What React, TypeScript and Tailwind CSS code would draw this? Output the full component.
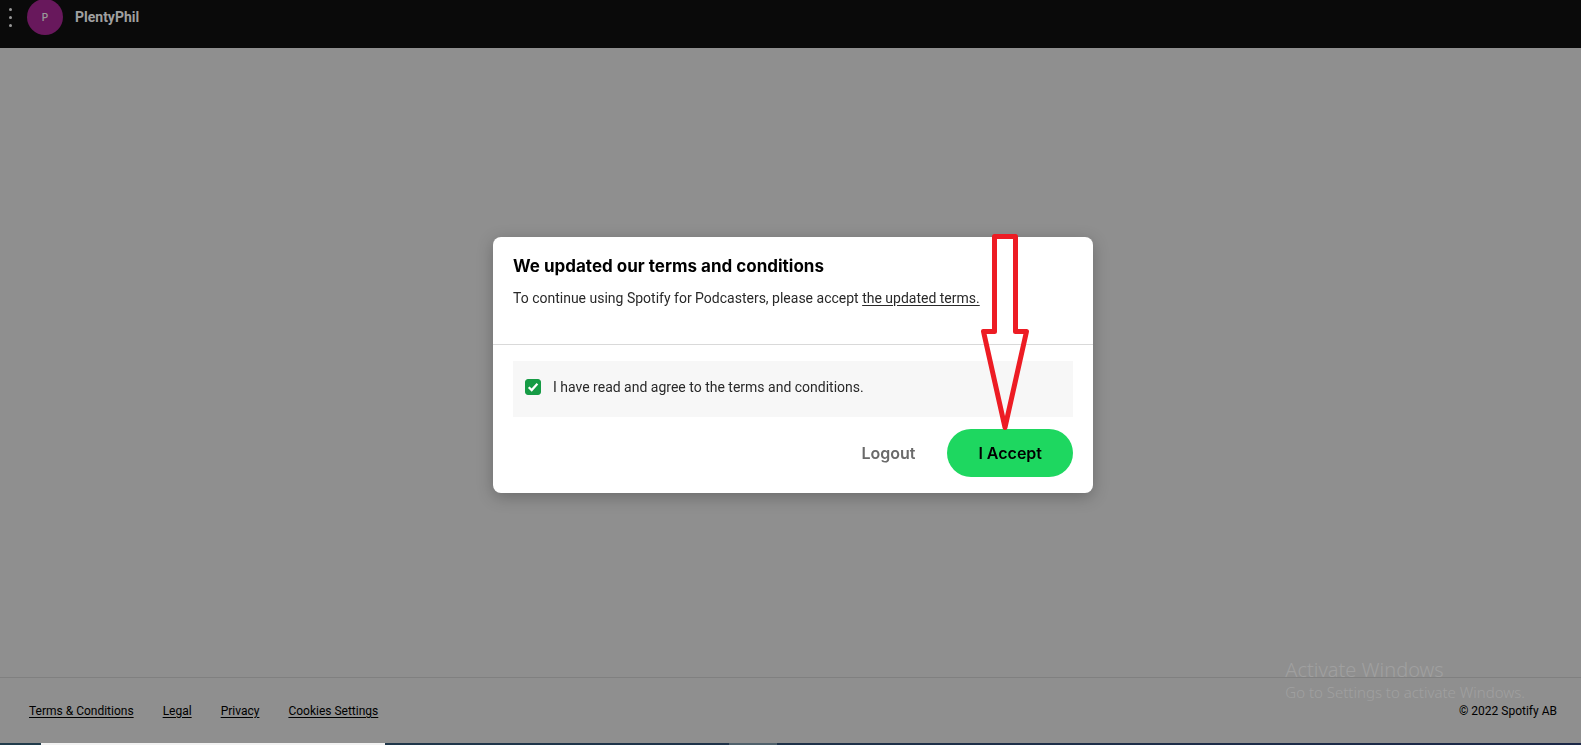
import { useState } from "react";

const FOOTER_LINKS = ["Terms & Conditions", "Legal", "Privacy", "Cookies Settings"];

function Header() {
  return (
    <header className="flex h-12 shrink-0 items-center bg-[#0a0a0a] pb-3.5 pl-[9px]">
      <button type="button" aria-label="Menu" className="mr-[15px] flex w-[3px] flex-col gap-[5px] text-[#999]">
        <span className="size-[3px] rounded-full bg-current" />
        <span className="size-[3px] rounded-full bg-current" />
        <span className="size-[3px] rounded-full bg-current" />
      </button>
      <span className="flex size-9 shrink-0 items-center justify-center rounded-full bg-[#68185c] text-[10px] font-medium text-[#999]">
        P
      </span>
      <span className="ml-3 text-sm font-bold text-[#a0a0a0]">PlentyPhil</span>
    </header>
  );
}

function Footer() {
  return (
    <footer className="relative flex h-[66px] shrink-0 items-center justify-between border-t border-[#808080] pl-[29px] pr-6 text-xs text-black">
      <nav className="flex gap-[29px]">
        {FOOTER_LINKS.map((label) => (
          <a key={label} href="#" className="underline underline-offset-2">
            {label}
          </a>
        ))}
      </nav>
      <span>© 2022 Spotify AB</span>

      {/* system watermark */}
      <div className="pointer-events-none absolute -top-5 right-14 font-['Noto_Sans',sans-serif] text-[#a0a0a0]">
        <p className="text-xl leading-6 font-light">Activate Windows</p>
        <p className="text-[15px] leading-5 font-light">Go to Settings to activate Windows.</p>
      </div>
    </footer>
  );
}

function Taskbar() {
  return (
    <div className="flex h-0.5 shrink-0 bg-linear-to-r from-[#213c4b] to-[#1b2747]">
      <div className="ml-[41px] w-[344px] bg-[#f2f2f2]" />
      <div className="ml-[344px] w-12 bg-[#50616c]" />
    </div>
  );
}

function Arrow() {
  return (
    <svg
      className="pointer-events-none absolute -top-1 right-16 h-[200px] w-12"
      viewBox="0 0 48 200"
      fill="none"
      stroke="#ed1c24"
      strokeWidth="5"
      strokeLinejoin="round"
      aria-hidden="true"
    >
      <path d="M13.500 3.500H34.500V98.500H45.500L24 194.500L2.500 98.500H13.500Z" />
    </svg>
  );
}

function TermsDialog() {
  const [agreed, setAgreed] = useState(true);

  return (
    <div className="fixed inset-0 flex items-center justify-center pb-[15px] pl-[5px]">
      <section
        role="dialog"
        aria-labelledby="terms-title"
        className="relative w-full max-w-[600px] rounded-lg bg-white shadow-[0_4px_16px_rgba(0,0,0,0.25)]"
      >
        <div className="h-[108px] border-b border-[#d9d9d9] px-5 pt-[17px]">
          <h1 id="terms-title" className="font-['Inter',sans-serif] text-[17px] leading-6 font-bold text-black">
            We updated our terms and conditions
          </h1>
          <p className="mt-2 text-sm leading-6 text-[#292929]">
            To continue using Spotify for Podcasters, please accept{" "}
            <a href="#" className="underline underline-offset-2">
              the updated terms.
            </a>
          </p>
        </div>

        <div className="px-5 py-4">
          <label className="flex h-14 items-start gap-3 bg-[#f7f7f7] px-3 pt-4 text-sm leading-5 text-[#292929]">
            <span className="relative mt-0.5 size-4 shrink-0">
              <input
                type="checkbox"
                checked={agreed}
                onChange={(e) => setAgreed(e.target.checked)}
                className="block size-4 appearance-none rounded-[3px] border border-[#169b45] checked:bg-[#169b45]"
              />
              {agreed && (
                <svg
                  viewBox="0 0 16 16"
                  className="pointer-events-none absolute inset-0 size-4"
                  fill="none"
                  stroke="#fff"
                  strokeWidth="2.2"
                  aria-hidden="true"
                >
                  <path d="M3.700 8.200L6.700 11.100L12.400 4.700" />
                </svg>
              )}
            </span>
            I have read and agree to the terms and conditions.
          </label>

          <div className="mt-3 flex items-center justify-end gap-8 font-['Inter',sans-serif] text-base font-semibold">
            <button type="button" className="text-[#6a6a6a]">
              Logout
            </button>
            <button type="button" disabled={!agreed} className="h-12 rounded-full bg-[#1ed760] px-[31px] text-black">
              I Accept
            </button>
          </div>
        </div>

        <Arrow />
      </section>
    </div>
  );
}

export default function App() {
  return (
    <div className="flex min-h-screen flex-col bg-[#8f8f8f] font-['Roboto','Liberation_Sans',sans-serif]">
      <Header />
      <main className="grow" />
      <Footer />
      <Taskbar />
      <TermsDialog />
    </div>
  );
}
